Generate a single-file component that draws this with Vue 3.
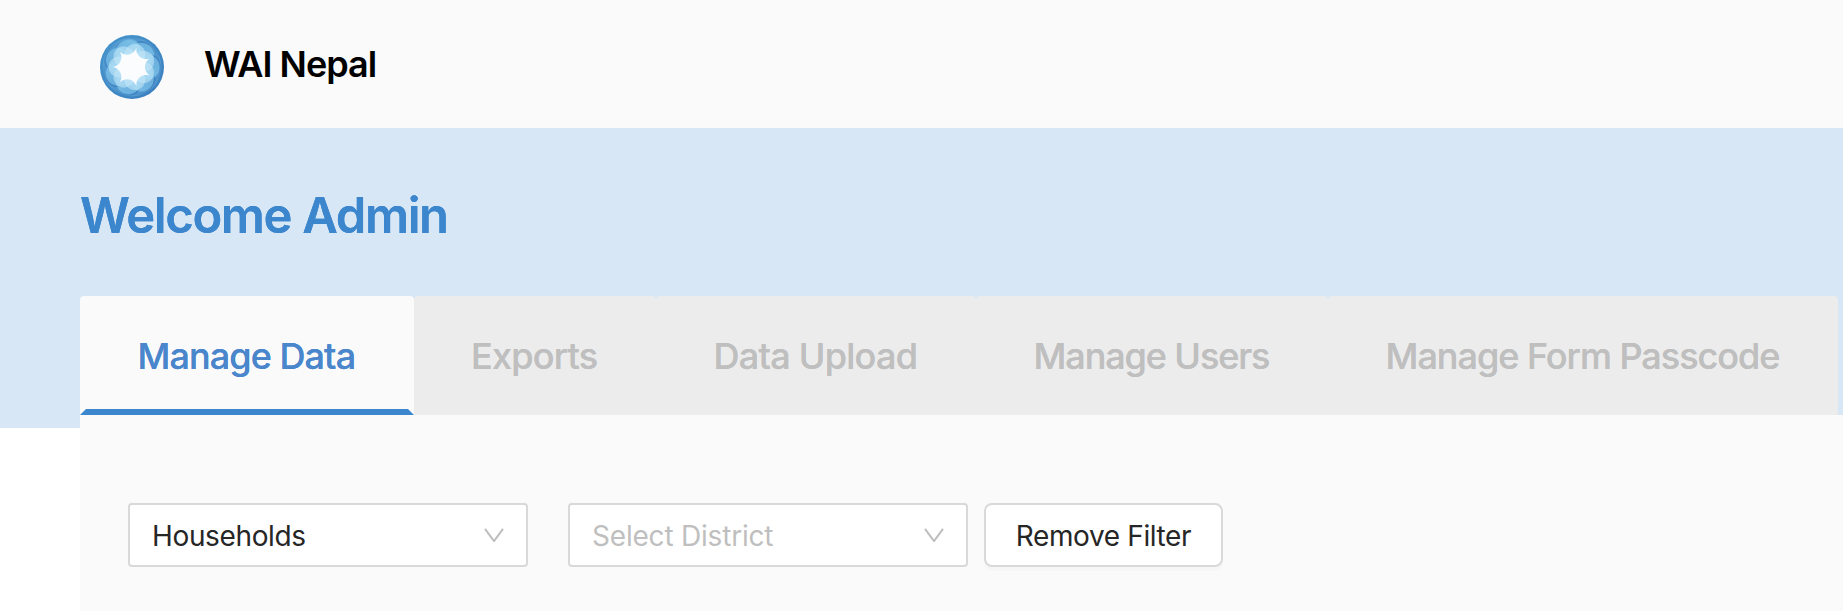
<script setup>
import { ref } from 'vue'

const tabs = [
  { id: 'data', label: 'Manage Data' },
  { id: 'exports', label: 'Exports' },
  { id: 'upload', label: 'Data Upload' },
  { id: 'users', label: 'Manage Users' },
  { id: 'passcode', label: 'Manage Form Passcode' },
]
const active = ref('data')

// Seven-fold rotation used by the logo rosette
const angles = Array.from({ length: 7 }, (_, i) => (i * 360) / 7)

const polar = (r, deg) => {
  const a = (deg * Math.PI) / 180
  return `${(32 + r * Math.cos(a)).toFixed(2)} ${(32 + r * Math.sin(a)).toFixed(2)}`
}
const star =
  `M${polar(19.6, 180)} ` +
  angles.map((a) => `A10 10 0 0 0 ${polar(19.6, 180 + a + 360 / 7)}`).join(' ') +
  'Z'
</script>

<template>
  <div class="page">
    <header class="header">
      <svg class="logo" viewBox="0 0 64 64" aria-hidden="true">
        <defs>
          <linearGradient id="rim" x1="0" y1="0" x2="1" y2="1">
            <stop offset="0" stop-color="#4596ce" />
            <stop offset="1" stop-color="#3a7cbd" />
          </linearGradient>
          <linearGradient id="blade" x1="0" y1="0" x2="1" y2="0">
            <stop offset="0" stop-color="#3476ba" stop-opacity=".7" />
            <stop offset="1" stop-color="#7cc4e9" stop-opacity=".6" />
          </linearGradient>
        </defs>
        <circle cx="32" cy="32" r="32" fill="url(#rim)" />
        <g v-for="a in angles" :key="'b' + a" :transform="`rotate(${a + 12} 32 32)`">
          <ellipse cx="32" cy="16.5" rx="20" ry="14" fill="url(#blade)" />
        </g>
        <g v-for="a in angles" :key="'m' + a" :transform="`rotate(${a - 13} 32 32)`">
          <circle cx="32" cy="17" r="12.5" fill="#86ccee" fill-opacity=".6" />
        </g>
        <g v-for="a in angles" :key="'l' + a" :transform="`rotate(${a + 13} 32 32)`">
          <circle cx="32" cy="19" r="10.5" fill="#c9eafa" fill-opacity=".55" />
        </g>
        <path :d="star" fill="#fafcfe" />
      </svg>
      <h2 class="brand">WAI Nepal</h2>
    </header>

    <main class="banner">
      <h1 class="welcome">Welcome Admin</h1>
      <nav class="tabs">
        <button
          v-for="t in tabs"
          :key="t.id"
          class="tab"
          :class="[t.id, { active: t.id === active }]"
          @click="active = t.id"
        >
          <span>{{ t.label }}</span>
        </button>
      </nav>
      <section class="panel">
        <div class="select first">
          <span class="value">Households</span>
          <svg class="arrow" viewBox="0 0 20 15"><path d="M1 .8 10 13.2 19 .8" /></svg>
        </div>
        <div class="select second">
          <span class="placeholder">Select District</span>
          <svg class="arrow" viewBox="0 0 20 15"><path d="M1 .8 10 13.2 19 .8" /></svg>
        </div>
        <button class="remove">Remove Filter</button>
      </section>
    </main>
  </div>
</template>

<style>
body {
  background: #fff;
  overflow: hidden;
}
</style>

<style scoped>
.page {
  height: 611px;
  overflow: hidden;
  font-family: Inter, "Liberation Sans", sans-serif;
}
.page * {
  box-sizing: border-box;
}
.header {
  display: flex;
  align-items: center;
  height: 128px;
  padding-left: 100px;
  background: #fafafa;
}
.logo {
  width: 64px;
  height: 64px;
  margin-top: 6px;
}
.brand {
  margin: 0 0 0 40px;
  font-size: 36px;
  line-height: 44px;
  font-weight: 600;
  letter-spacing: -1px;
  color: #000;
}
.banner {
  height: 483px;
  padding-left: 80px;
  background: linear-gradient(#d8e7f6 300px, #fff 300px);
}
.welcome {
  margin: 0;
  padding-top: 58px;
  height: 168px;
  font-size: 49px;
  line-height: 60px;
  font-weight: 600;
  letter-spacing: -1.37px;
  color: #3b86cc;
  text-shadow: 0 0 0.5px currentColor;
}
.tabs {
  display: flex;
  height: 119px;
}
.tab {
  flex: none;
  margin: 0;
  padding: 7px 0 0;
  border: 6px solid transparent;
  border-top: 0;
  border-radius: 4px 4px 0 0;
  background: #ececec;
  color: #bfbfbf;
  font: 500 36px/44px Inter, "Liberation Sans", sans-serif;
  white-space: nowrap;
  text-align: center;
  text-shadow: 0 0 0.5px currentColor;
}
.tab.active {
  background: #fafafa;
  color: #4a86cc;
  border-bottom-color: #3b86cc;
}
.tab span {
  margin-left: -1px;
}
.tab.data { width: 333.7px; letter-spacing: -0.92px; }
.tab.exports { width: 242px; letter-spacing: -0.76px; }
.tab.upload { width: 320.3px; letter-spacing: -0.72px; }
.tab.users { width: 352px; letter-spacing: -1.1px; }
.tab.passcode { width: 510px; letter-spacing: -1.02px; }
.panel {
  display: flex;
  align-items: flex-start;
  height: 196px;
  padding: 88px 0 0 48px;
  background: #fafafa;
}
.select {
  display: flex;
  align-items: center;
  justify-content: space-between;
  width: 400px;
  height: 64px;
  padding: 1px 22px 0;
  border: 2px solid #d9d9d9;
  border-radius: 4px;
  background: #fff;
  font-size: 28px;
  line-height: 34px;
  letter-spacing: -0.36px;
  color: #262626;
}
.first {
  margin-right: 40px;
}
.second {
  margin-right: 16px;
  letter-spacing: -0.2px;
}
.placeholder {
  color: #bfbfbf;
}
.arrow {
  width: 20px;
  height: 15px;
  fill: none;
  stroke: #bfbfbf;
  stroke-width: 2;
  stroke-linejoin: round;
}
.remove {
  width: 239px;
  height: 64px;
  margin: 0;
  padding: 2px 0 0;
  border: 2px solid #d9d9d9;
  border-radius: 8px;
  background: #fff;
  box-shadow: 0 4px 0 rgba(0, 0, 0, 0.016);
  font: 400 28px/34px Inter, "Liberation Sans", sans-serif;
  letter-spacing: -0.38px;
  color: #262626;
}
</style>
